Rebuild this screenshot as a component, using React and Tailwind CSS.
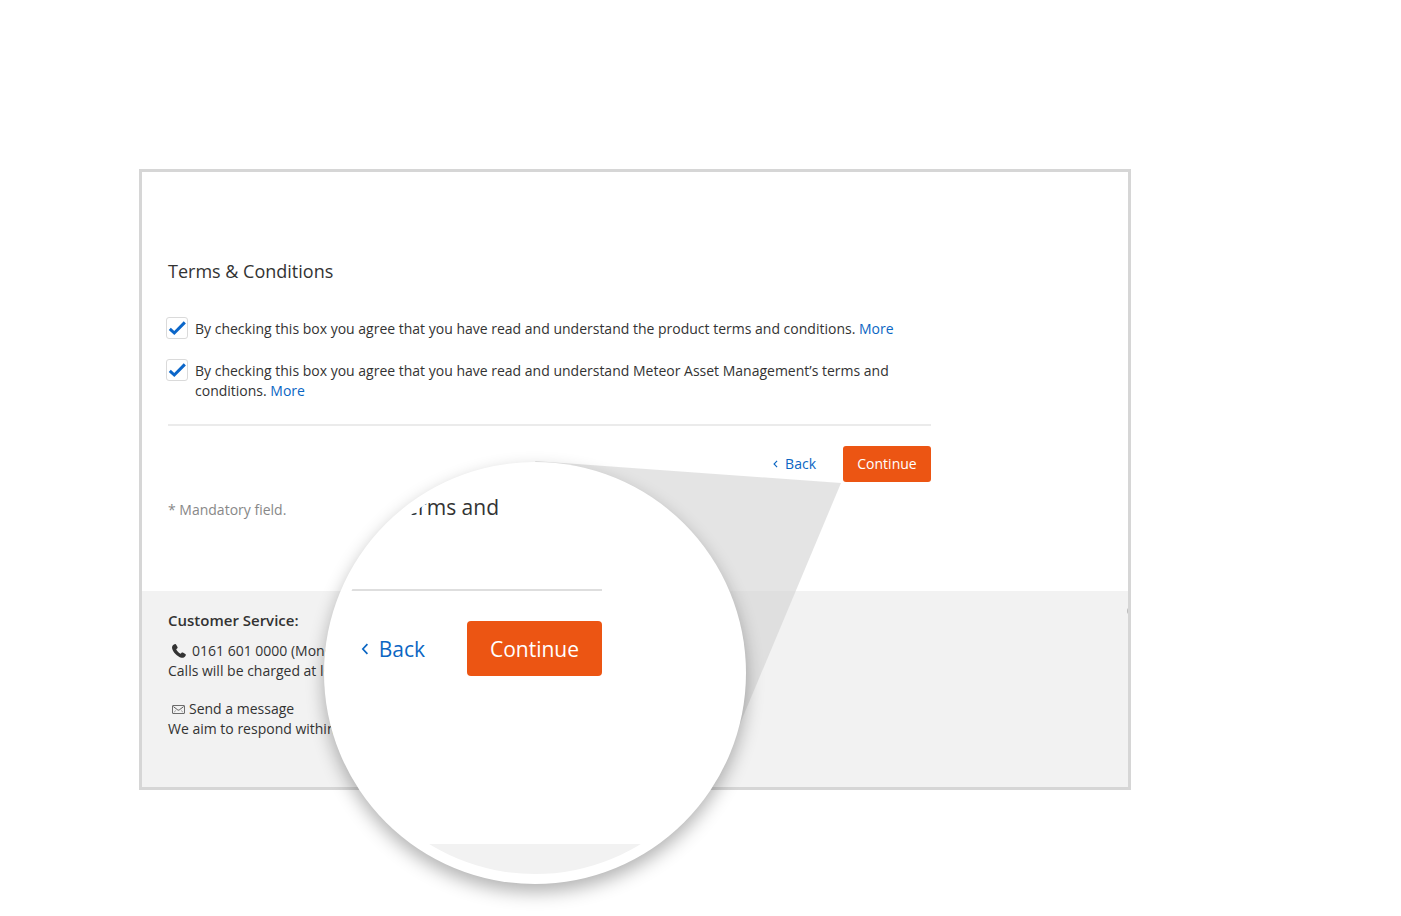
import React from 'react';

function Tick() {
  return (
    <svg className="pointer-events-none [grid-area:1/1] invisible peer-checked:visible" width="22" height="22" viewBox="0 0 22 22" fill="none" aria-hidden="true">
      <path d="M3.8 11.8L8.3 16L18.8 5.4" stroke="#0b66c9" strokeWidth="3" />
    </svg>
  );
}

function Agreement({ id, children }) {
  return (
    <div className="flex items-start gap-[7px]">
      <span className="grid -ml-0.5 -mt-0.5 shrink-0">
        <input
          id={id}
          type="checkbox"
          defaultChecked
          className="peer [grid-area:1/1] appearance-none size-[22px] rounded-[3px] border border-[#dadada] bg-white"
        />
        <Tick />
      </span>
      <p>
        <label htmlFor={id}>{children}</label>{' '}
        <a href="#terms" className="text-[#0b66c3]">More</a>
      </p>
    </div>
  );
}

function Chevron({ className }) {
  return (
    <svg className={className} viewBox="0 0 6 10" fill="none" stroke="currentColor" strokeWidth="1.4" aria-hidden="true">
      <path d="M5 1L1.2 5L5 9" />
    </svg>
  );
}

function ServiceFooter() {
  return (
    <footer className="relative overflow-hidden bg-[#f2f2f2] h-[196px] pl-[26px] pt-[19px]">
      <h2 className="text-[15px] leading-5 font-semibold mb-[11px]">Customer Service:</h2>
      <p className="flex items-center">
        <svg className="size-[14px] ml-1 mr-1.5" viewBox="0 0 14 14" fill="currentColor" aria-hidden="true">
          <path d="M2.6 0.2C3.4 -0.1 3.9 0.1 4.2 0.7L5.5 3C5.8 3.6 5.6 4.1 5.1 4.5L4.2 5.2C4.8 6.8 6.8 8.8 8.6 9.7L9.4 8.9C9.8 8.4 10.3 8.3 10.9 8.6L13.3 9.9C13.9 10.3 14.1 10.8 13.7 11.4C12.8 13.2 11.3 14 9.4 13.7C5.2 12.7 0.9 8.3 0.1 4.3C-0.2 2.3 0.8 0.9 2.6 0.2Z" />
        </svg>
        0161 601 0000 (Mond
      </p>
      <p className="mb-[18px]">Calls will be charged at loc</p>
      <p className="flex items-center">
        <svg className="w-[13px] h-[9px] ml-1 mr-1" viewBox="0 0 13 9" fill="none" stroke="currentColor" strokeWidth="0.7" aria-hidden="true">
          <rect x="0.5" y="0.5" width="12" height="8" rx="0.5" />
          <path d="M1.4 1.6L5.6 4.8Q6.5 5.5 7.4 4.8L11.6 1.6" strokeWidth="0.8" />
          <path d="M1.8 7.4L4 5.4M11.2 7.4L9 5.4" strokeWidth="0.4" />
        </svg>
        <a href="#message">Send a message</a>
      </p>
      <p>We aim to respond within</p>
      <span className="absolute -right-[7px] top-4 size-2 rounded-full bg-[#bbbbbb]" />
    </footer>
  );
}

// Wedge that joins the Continue button to the magnified circle
function Beam() {
  return (
    <svg className="absolute left-[393px] top-[289px]" width="307" height="280" viewBox="0 0 307 280" aria-hidden="true">
      <path d="M0 0L306 22L202 270L100 200Z" fill="#d3d3d3" fillOpacity="0.62" />
    </svg>
  );
}

function Lens() {
  return (
    <div className="absolute left-[182px] top-[290px] size-[422px] rounded-full bg-white p-2.5 shadow-[0_8px_18px_rgba(0,0,0,0.3)]">
      <div className="flex flex-col size-full rounded-full overflow-hidden text-[21px] leading-8">
        <div className="w-[268px] pt-[19px]">
          <p className="text-right pr-[103px]">terms and</p>
          <hr className="mt-[66px] border-t-2 border-[#dedede]" />
          <div className="mt-[30px] flex items-center justify-end gap-[42px]">
            <a href="#back" className="flex items-center gap-2.5 text-[#0b66c3]">
              <Chevron className="w-2 h-3" />
              Back
            </a>
            <button type="button" className="h-[55px] w-[135px] rounded bg-[#ec5513] text-white">Continue</button>
          </div>
        </div>
        <div className="mt-auto h-[30px] bg-[#f2f2f2]" />
      </div>
    </div>
  );
}

function App() {
  return (
    <div className="min-h-screen bg-white pt-[169px] pl-[139px] pr-[270px] font-['Open_Sans',sans-serif] text-[14px] leading-5 text-[#333333]">
      <main className="relative border-3 border-[#d6d6d6]">
        <form className="h-[419px] pl-[26px] pt-[87px]">
          <div className="max-w-[763px]">
            <h1 className="text-[18px] leading-6 mb-9">Terms &amp; Conditions</h1>
            <div className="flex flex-col gap-[22px] max-w-[740px]">
              <Agreement id="product-terms">
                By checking this box you agree that you have read and understand the product terms and conditions.
              </Agreement>
              <Agreement id="company-terms">
                By checking this box you agree that you have read and understand Meteor Asset Management’s terms and conditions.
              </Agreement>
            </div>
            <hr className="mt-[23px] border-t-2 border-[#ebebeb]" />
            <div className="mt-5 flex items-center justify-end gap-[27px]">
              <a href="#back" className="flex items-center gap-[7px] text-[#0b66c3]">
                <Chevron className="w-[5px] h-2" />
                Back
              </a>
              <button type="button" className="h-9 w-[88px] rounded-[3px] bg-[#ec5513] text-white">Continue</button>
            </div>
            <p className="mt-[18px] text-[#888888]">* Mandatory field.</p>
          </div>
        </form>
        <ServiceFooter />
        <Beam />
        <Lens />
      </main>
    </div>
  );
}

export default App;
